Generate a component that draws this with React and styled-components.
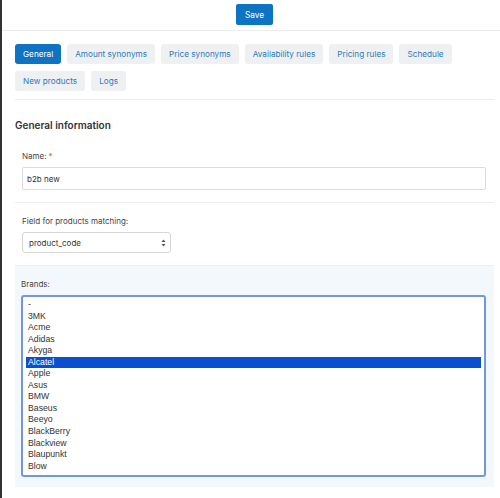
import React from 'react'
import styled, { createGlobalStyle } from 'styled-components'

const GlobalStyle = createGlobalStyle`
    html, body {
        margin: 0;
        padding: 0;
        background: #fff;
        font-family: Inter, "Noto Sans", sans-serif;
    }
    * {
        box-sizing: border-box;
    }
`

const Page = styled.div`
    min-height: 100vh;
    border-left: 2px solid #333;
    padding: 0 6px 0 13px;
    overflow: hidden;
`
const TopBar = styled.div`
    display: flex;
    justify-content: center;
    padding: 4px 6px 5px 13px;
    margin: 0 -6px 0 -13px;
    border-bottom: 1px solid #ececec;
`
const SaveButton = styled.button`
    height: 21px;
    padding: 0 9px;
    border: none;
    border-radius: 2px;
    background: #0e73c2;
    color: #fff;
    font-family: inherit;
    font-size: 8.3px;
    cursor: pointer;
`
const Tabs = styled.div`
    display: flex;
    flex-wrap: wrap;
    gap: 7px 6px;
    padding: 13px 1px 8px 0;
    border-bottom: 1px solid #ededed;
`
const Tab = styled.div`
    height: 20px;
    display: flex;
    align-items: center;
    padding: 0 8px;
    border-radius: 3px;
    font-size: 8.2px;
    background: ${props => props.active ? '#0e73c2' : '#eef0f2'};
    color: ${props => props.active ? '#fff' : '#2f7abd'};
    cursor: pointer;
`
const Heading = styled.h2`
    margin: 18px 0 6px;
    font-size: 10px;
    line-height: 14px;
    font-weight: 600;
    color: #333;
`
const Group = styled.div`
    padding: ${props => props.last ? '12px 8px 10px 6px' : '12px 8px 12px 7px'};
    border-bottom: ${props => props.last ? 'none' : '1px solid #eeeeee'};
    background: ${props => props.active ? '#f3f8fd' : 'transparent'};
`
const Label = styled.div`
    font-size: 8px;
    line-height: 12px;
    color: #444;
    margin-bottom: 5px;
`
const Required = styled.span`
    color: #d9534f;
    margin-left: 2px;
`
const Input = styled.div`
    height: 23px;
    display: flex;
    align-items: center;
    padding: 0 4px;
    border: 1px solid #dcdcdc;
    border-radius: 2px;
    font-size: 8px;
    color: #333;
`
const Select = styled.div`
    width: 149px;
    height: 21px;
    display: flex;
    align-items: center;
    justify-content: space-between;
    padding: 0 4px 0 6px;
    border: 1px solid #d6d6d6;
    border-radius: 3px;
    font-size: 8px;
    color: #333;
`
const ListBox = styled.div`
    height: 182px;
    padding: 2px 3px;
    border: 2px solid #7296e4;
    border-radius: 3px;
    background: #fff;
    overflow: hidden;
`
const Option = styled.div`
    height: 11.55px;
    line-height: 11.55px;
    padding-left: 2px;
    font-family: "Liberation Sans", Arial, sans-serif;
    font-size: 8.7px;
    white-space: nowrap;
    background: ${props => props.selected ? '#0b4fd1' : 'transparent'};
    color: ${props => props.selected ? '#fff' : '#333'};
`

const tabs = [
    'General', 'Amount synonyms', 'Price synonyms', 'Availability rules',
    'Pricing rules', 'Schedule', 'New products', 'Logs',
]

const brands = [
    '-', '3MK', 'Acme', 'Adidas', 'Akyga', 'Alcatel', 'Apple', 'Asus', 'BMW',
    'Baseus', 'Beeyo', 'BlackBerry', 'Blackview', 'Blaupunkt', 'Blow',
]

const Arrows = () => (
    <svg width="5" height="8" viewBox="0 0 5 8">
        <path d="M2.5 0.5 L4.5 3 L0.5 3 Z" fill="#555" />
        <path d="M2.5 7.5 L4.5 5 L0.5 5 Z" fill="#555" />
    </svg>
)

const App = () => {
    return (
        <Page>
            <GlobalStyle />
            <TopBar>
                <SaveButton>Save</SaveButton>
            </TopBar>
            <Tabs>
                {tabs.map((t, i) => (
                    <Tab key={t} active={i === 0}>{t}</Tab>
                ))}
            </Tabs>
            <Heading>General information</Heading>
            <Group>
                <Label>Name:<Required>*</Required></Label>
                <Input>b2b new</Input>
            </Group>
            <Group>
                <Label>Field for products matching:</Label>
                <Select>
                    <span>product_code</span>
                    <Arrows />
                </Select>
            </Group>
            <Group active last>
                <Label>Brands:</Label>
                <ListBox>
                    {brands.map(b => (
                        <Option key={b} selected={b === 'Alcatel'}>{b}</Option>
                    ))}
                </ListBox>
            </Group>
        </Page>
    )
}

export default App
